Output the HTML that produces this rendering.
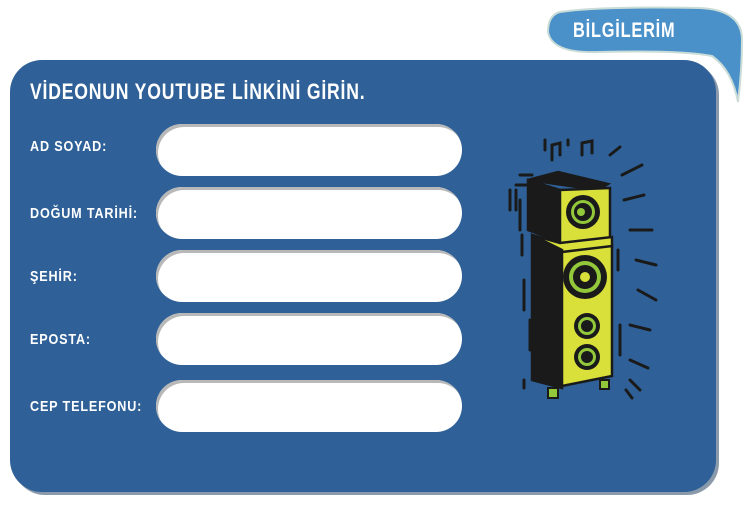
<!DOCTYPE html>
<html><head><meta charset="utf-8"><style>
html,body{margin:0;padding:0;background:#fff;width:748px;height:510px;overflow:hidden;position:relative}
.panel{position:absolute;left:10px;top:60px;width:706px;height:432px;background:#2f6198;border-radius:32px;box-shadow:3px 3px 0 #8a9aab}
.t{position:absolute;color:#fff;font-family:"Liberation Sans",sans-serif;font-weight:bold;letter-spacing:1px;transform-origin:left top;white-space:nowrap}
.h{left:30px;top:79px;font-size:22px;transform:scaleX(0.8)}
.l{left:30px;font-size:15px;transform:scaleX(0.84)}
.in{position:absolute;left:156px;width:306px;height:52px;background:#fff;border-radius:26px;box-shadow:inset 2px 3px 0 #b8b8b8}
</style></head><body>
<svg style="position:absolute;left:0;top:0" width="748" height="510">
<path d="M560 12 Q600 6 700 8 Q742 10 742 40 Q742 70 738 102 Q732 70 712 56 Q680 50 600 52 Q552 54 548 32 Q548 15 560 12Z" fill="#4a90c9" stroke="#c9dcd8" stroke-width="2"/>
</svg>
<div class="t" style="left:573px;top:19px;font-size:21px;transform:scaleX(0.78)">BİLGİLERİM</div>
<div class="panel"></div>
<div class="t h">VİDEONUN YOUTUBE LİNKİNİ GİRİN.</div>
<div class="t l" style="top:138px">AD SOYAD:</div>
<div class="t l" style="top:205px">DOĞUM TARİHİ:</div>
<div class="t l" style="top:268px">ŞEHİR:</div>
<div class="t l" style="top:331px">EPOSTA:</div>
<div class="t l" style="top:398px">CEP TELEFONU:</div>
<div class="in" style="top:124px"></div>
<div class="in" style="top:187px"></div>
<div class="in" style="top:250px"></div>
<div class="in" style="top:313px"></div>
<div class="in" style="top:380px"></div>
<svg style="position:absolute;left:490px;top:130px" width="180" height="280">
<g stroke="#1a1a1a" stroke-width="3" fill="none" stroke-linecap="round">
<path d="M30 45h12M26 55h12M20 60v20M26 60v20M30 70v30M32 105v20M34 150v30M40 190v30M34 250v8M120 25l10-8M132 45l20-10M134 70l20-5M140 100h22M146 130l20 5M148 160l18 10M140 195l20 5M140 230l18 8M140 250l10 10M136 260l6 8M120 120v30M128 120v20M116 170v30M130 195v30"/>
<path d="M62 30v-15l8-2v12M55 20v-10M78 15v-5M92 25v-12l10-2v12"/>
</g>
<g stroke="#1a1a1a" stroke-width="2.5">
<path d="M38 50l30-8 50 12-10 6z" fill="#1a1a1a"/>
<path d="M38 50v50l32 12V60z" fill="#1a1a1a"/>
<path d="M70 60l50-2v50l-50 6z" fill="#d8e039"/>
<path d="M42 105l28 8 52-6v10l-50 8z" fill="#d8e039"/>
<path d="M42 105v145l30 8V120z" fill="#1a1a1a"/>
<path d="M72 122l50-6v130l-50 10z" fill="#d8e039"/>
</g>
<g fill="#1a1a1a">
<circle cx="93" cy="82" r="17"/><circle cx="93" cy="82" r="12" fill="#93c83b"/><circle cx="93" cy="82" r="9"/><circle cx="91" cy="82" r="4" fill="#93c83b"/>
<circle cx="95" cy="147" r="22"/><circle cx="95" cy="147" r="16" fill="#93c83b"/><circle cx="95" cy="147" r="12"/><circle cx="95" cy="147" r="5" fill="#d8e039"/>
<circle cx="97" cy="196" r="13"/><circle cx="97" cy="196" r="9" fill="#93c83b"/><circle cx="97" cy="196" r="6"/>
<circle cx="97" cy="227" r="13"/><circle cx="97" cy="227" r="9" fill="#93c83b"/><circle cx="97" cy="227" r="6"/>
<rect x="58" y="258" width="10" height="10" fill="#93c83b" stroke="#1a1a1a" stroke-width="2"/>
<rect x="110" y="250" width="9" height="9" fill="#93c83b" stroke="#1a1a1a" stroke-width="2"/>
</g>
</svg>
</body></html>
